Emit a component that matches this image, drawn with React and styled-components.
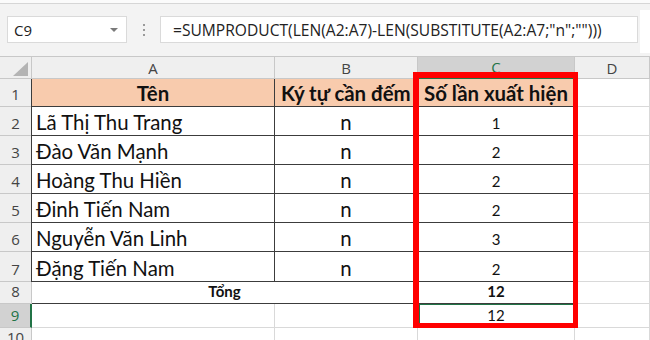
import React from 'react'
import styled, { createGlobalStyle } from 'styled-components'

const GlobalStyle = createGlobalStyle`
  body {
    margin: 0;
    background: #ffffff;
    overflow: hidden;
    font-family: "Open Sans", "Noto Sans", sans-serif;
  }
`

const rows = [
  { n: 2, name: 'Lã Thị Thu Trang', count: 1 },
  { n: 3, name: 'Đào Văn Mạnh', count: 2 },
  { n: 4, name: 'Hoàng Thu Hiền', count: 2 },
  { n: 5, name: 'Đinh Tiến Nam', count: 2 },
  { n: 6, name: 'Nguyễn Văn Linh', count: 3 },
  { n: 7, name: 'Đặng Tiến Nam', count: 2 },
]

const GREEN = '#217346'
const GRID = '#d9d9d9'
const DARK = '#3c3c3c'

function App() {
  return (
    <Page>
      <GlobalStyle />
      <TopStrip />
      <FormulaBar>
        <NameBox>
          C9
          <Caret />
        </NameBox>
        <Grip>
          <span /><span /><span />
        </Grip>
        <FormulaBox>=SUMPRODUCT(LEN(A2:A7)-LEN(SUBSTITUTE(A2:A7;"n";"")))</FormulaBox>
        <Expand />
      </FormulaBar>

      <Sheet>
        <Grid>
          <Corner><Triangle /></Corner>
          <ColHead>A</ColHead>
          <ColHead>B</ColHead>
          <ColHead $active>C</ColHead>
          <ColHead>D</ColHead>

          <RowHead>1</RowHead>
          <Cell $fill="#f8cbad" $bold $align="center" $dark $lead>Tên</Cell>
          <Cell $fill="#f8cbad" $bold $align="left" $dark>Ký tự cần đếm</Cell>
          <Cell $fill="#f8cbad" $bold $align="left" $dark>Số lần xuất hiện</Cell>
          <Cell />

          {rows.map(r => (
            <React.Fragment key={r.n}>
              <RowHead>{r.n}</RowHead>
              <Cell $dark $lead>{r.name}</Cell>
              <Cell $dark $align="center">n</Cell>
              <Cell $dark $align="center" $small>{r.count}</Cell>
              <Cell />
            </React.Fragment>
          ))}

          <RowHead>8</RowHead>
          <Cell $span={2} $bold $small $align="center" $darkBottom>Tổng</Cell>
          <Cell $bold $small $align="center" $darkBottom>12</Cell>
          <Cell />

          <RowHead $active>9</RowHead>
          <Cell />
          <Cell />
          <Cell $small $align="center" $current>12</Cell>
          <Cell />

          <RowHead>10</RowHead>
          <Cell />
          <Cell />
          <Cell />
          <Cell />
        </Grid>
        <Highlight />
      </Sheet>
    </Page>
  )
}

export default App

const Page = styled.div`
width:650px;
height:340px;
overflow:hidden;
background:#f3f3f3;
`

const TopStrip = styled.div`
height:3px;
background:#fbfbfb;
border-bottom:1px solid #d6d6d6;
`

const FormulaBar = styled.div`
height:52px;
box-sizing:border-box;
display:flex;
align-items:flex-start;
padding:12px 0 0 7px;
`

const NameBox = styled.div`
position:relative;
width:120px;
height:27px;
box-sizing:border-box;
background:#fff;
border:1px solid #dadada;
padding-left:6px;
display:flex;
align-items:center;
font-size:15px;
color:#222;
`

const Caret = styled.span`
position:absolute;
right:8px;
top:11px;
border-left:4px solid transparent;
border-right:4px solid transparent;
border-top:4px solid #7a7a7a;
`

const Grip = styled.div`
width:33px;
height:27px;
display:flex;
flex-direction:column;
align-items:center;
justify-content:center;
gap:3px;
span{
    width:2px;
    height:2px;
    background:#9a9a9a;
}
`

const FormulaBox = styled.div`
flex:1;
height:27px;
box-sizing:border-box;
background:#fff;
border:1px solid #dadada;
padding-left:12px;
display:flex;
align-items:center;
font-size:15.6px;
color:#222;
white-space:nowrap;
overflow:hidden;
`

const Expand = styled.div`
width:10px;
height:43px;
margin-top:-6px;
margin-left:2px;
background:#fff;
`

const Sheet = styled.div`
position:relative;
background:#fff;
`

const Grid = styled.div`
display:grid;
grid-template-columns:32px 243px 143px 157px 1fr;
grid-template-rows:22px 28px 29px 29px 29px 29px 29px 30px 22px 24px 22px;
border-top:1px solid #c8c8c8;
`

const Corner = styled.div`
background:#efefef;
border-right:1px solid #c8c8c8;
border-bottom:1px solid #c8c8c8;
position:relative;
`

const Triangle = styled.span`
position:absolute;
right:3px;
bottom:2px;
border-left:15px solid transparent;
border-bottom:14px solid #b4b4b4;
`

const ColHead = styled.div`
background:${p => p.$active ? '#d2d2d2' : '#efefef'};
color:${p => p.$active ? GREEN : '#444'};
border-right:1px solid #c8c8c8;
border-bottom:${p => p.$active ? `2px solid ${GREEN}` : '1px solid #c8c8c8'};
display:flex;
align-items:center;
justify-content:center;
font-size:15px;
box-sizing:border-box;
`

const RowHead = styled.div`
background:${p => p.$active ? '#d2d2d2' : '#efefef'};
color:${p => p.$active ? GREEN : '#444'};
border-right:${p => p.$active ? `2px solid ${GREEN}` : '1px solid #c8c8c8'};
border-bottom:1px solid #c8c8c8;
display:flex;
align-items:flex-end;
justify-content:center;
padding-bottom:2px;
font-size:15px;
box-sizing:border-box;
`

const Cell = styled.div`
grid-column:span ${p => p.$span || 1};
background:${p => p.$fill || '#fff'};
border-right:1px solid ${p => p.$dark ? DARK : GRID};
border-bottom:1px solid ${p => (p.$dark || p.$darkBottom) ? DARK : GRID};
box-shadow:${p => p.$current ? `inset 0 1px 0 ${GREEN}, inset 2px 0 0 ${GREEN}` : p.$lead ? `-1px 0 0 ${DARK}` : 'none'};
display:flex;
align-items:flex-end;
justify-content:${p => p.$align === 'center' ? 'center' : 'flex-start'};
padding:0 ${p => p.$align === 'left' ? '6px' : '4px'} ${p => p.$small ? '3px' : '1px'};
font-family:Lato, "Open Sans", sans-serif;
font-weight:${p => p.$bold ? 700 : 400};
font-size:${p => p.$small ? '15px' : '20.4px'};
line-height:1.2;
color:#111;
white-space:nowrap;
box-sizing:border-box;
min-width:0;
`

const Highlight = styled.div`
position:absolute;
left:413px;
top:16px;
width:165px;
height:256px;
box-sizing:border-box;
border-style:solid;
border-color:#ff0000;
border-width:6px 5px 5px 6px;
pointer-events:none;
`
